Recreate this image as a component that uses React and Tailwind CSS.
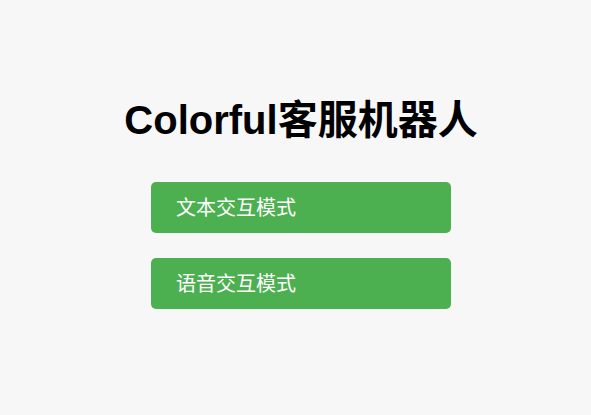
const modes = ['文本交互模式', '语音交互模式'];

const App = () => {
    return (
        <div
            className="min-h-screen w-full bg-[#f7f7f7] flex flex-col items-center pt-[97px] pl-[11px]"
            style={{ fontFamily: '"Liberation Sans", Arial, "Noto Sans CJK SC", sans-serif' }}
        >
            <h1 className="text-[40px] leading-[46px] font-bold text-black mb-[39px]">Colorful客服机器人</h1>
            <div className="flex flex-col gap-[25px]">
                {modes.map((mode) => (
                    <button
                        key={mode}
                        className="w-[300px] h-[51px] rounded-[5px] bg-[#4caf50] text-white text-[20px] text-left pl-[25px]"
                    >
                        {mode}
                    </button>
                ))}
            </div>
        </div>
    );
};

export default App;
